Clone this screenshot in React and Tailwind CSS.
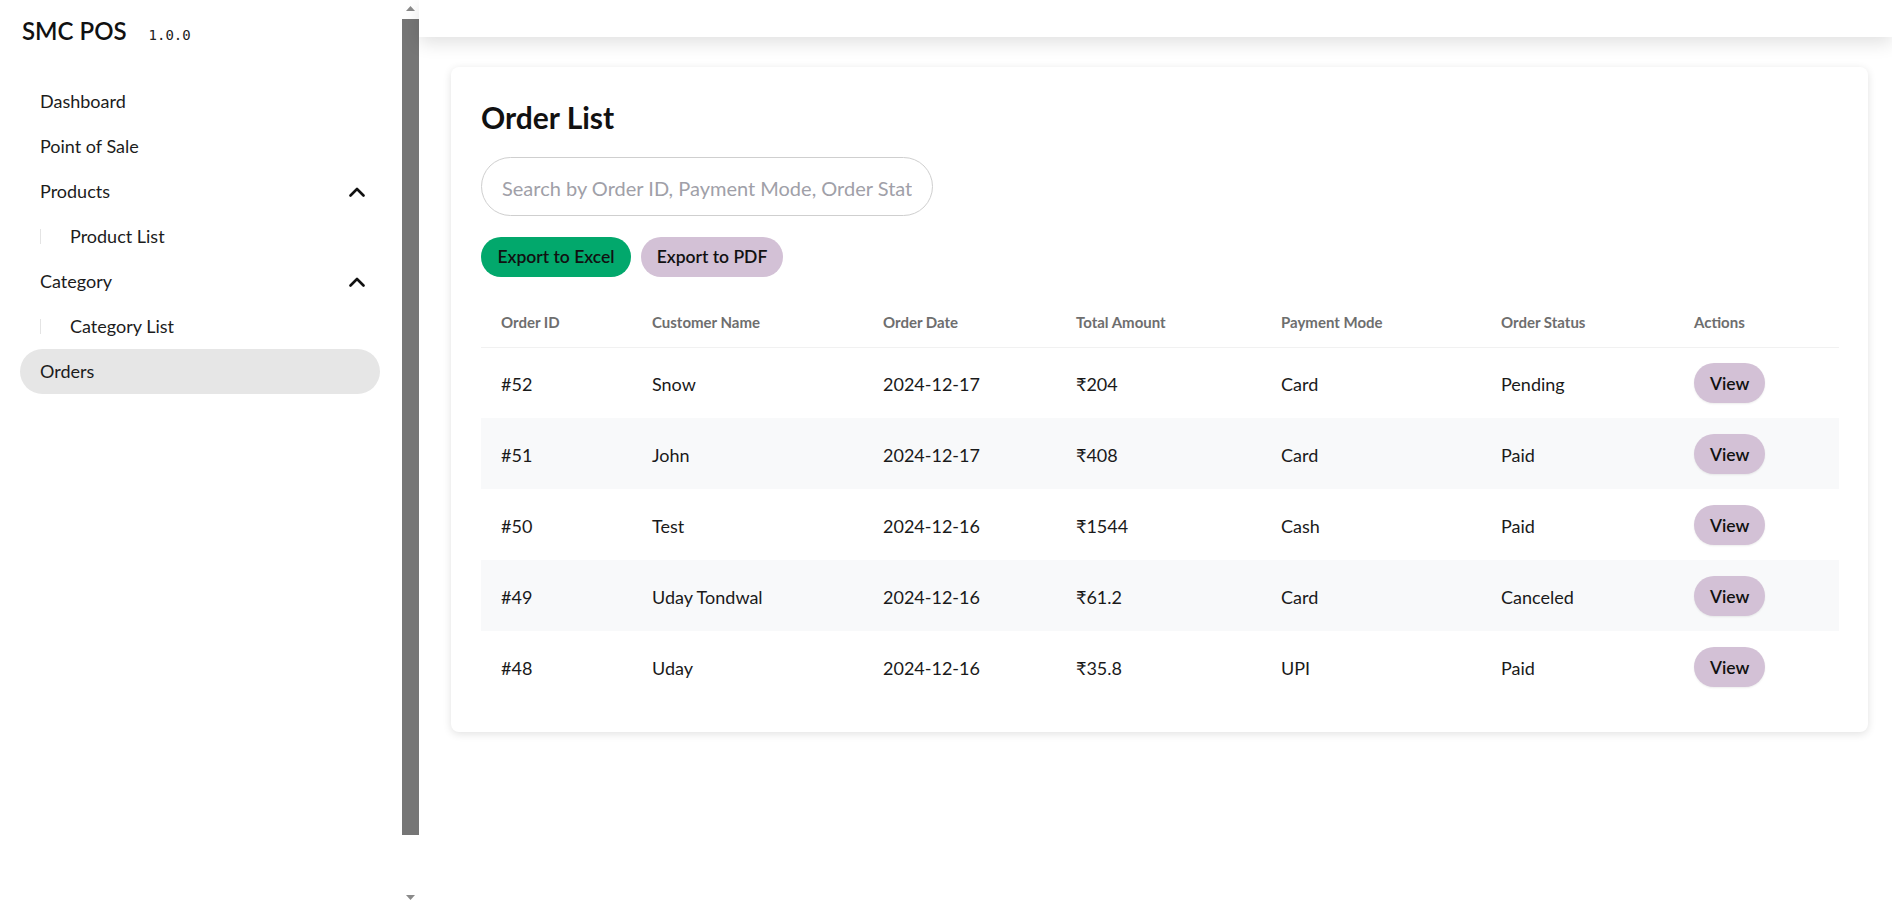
import React from 'react'

// Sidebar navigation entries
const navItems = [
  { label: 'Dashboard' },
  { label: 'Point of Sale' },
  { label: 'Products', open: true },
  { label: 'Product List', sub: true },
  { label: 'Category', open: true },
  { label: 'Category List', sub: true },
  { label: 'Orders', active: true },
]

const orders = [
  { id: '#52', name: 'Snow', date: '2024-12-17', total: '₹204', mode: 'Card', status: 'Pending' },
  { id: '#51', name: 'John', date: '2024-12-17', total: '₹408', mode: 'Card', status: 'Paid' },
  { id: '#50', name: 'Test', date: '2024-12-16', total: '₹1544', mode: 'Cash', status: 'Paid' },
  { id: '#49', name: 'Uday Tondwal', date: '2024-12-16', total: '₹61.2', mode: 'Card', status: 'Canceled' },
  { id: '#48', name: 'Uday', date: '2024-12-16', total: '₹35.8', mode: 'UPI', status: 'Paid' },
]

const columns = [
  { label: 'Order ID', width: 'w-[151px]' },
  { label: 'Customer Name', width: 'w-[231px]' },
  { label: 'Order Date', width: 'w-[193px]' },
  { label: 'Total Amount', width: 'w-[205px]' },
  { label: 'Payment Mode', width: 'w-[220px]' },
  { label: 'Order Status', width: 'w-[193px]' },
  { label: 'Actions', width: 'w-[165px]' },
]

function ChevronUp() {
  return (
    <svg width="16" height="10" viewBox="0 0 16 10" fill="none">
      <polyline points="1.5,8.5 8,2 14.5,8.5" stroke="#111" strokeWidth="2.6" strokeLinecap="round" strokeLinejoin="round" />
    </svg>
  )
}

function Scrollbar() {
  return (
    <div className="flex w-[17px] shrink-0 flex-col items-center bg-white">
      <svg className="mt-[6px]" width="9" height="5" viewBox="0 0 9 5">
        <polygon points="0,5 4.5,0 9,5" fill="#8a8a8a" />
      </svg>
      <div className="mt-[8px] h-[816px] w-[17px] bg-[#767676]" />
      <div className="flex-1" />
      <svg className="mb-[1px]" width="9" height="5" viewBox="0 0 9 5">
        <polygon points="0,0 9,0 4.5,5" fill="#8a8a8a" />
      </svg>
    </div>
  )
}

function Sidebar() {
  return (
    <aside className="flex h-full w-[419px] shrink-0">
      <div className="flex-1 pl-5 pr-[22px]">
        {/* Brand */}
        <div className="h-[79px] pt-[16px] pl-[2px]">
          <div className="flex items-baseline gap-[22px]">
            <span className="text-[24px] leading-[30px] font-semibold text-[#111]">SMC POS</span>
            <span className="font-['DejaVu_Sans_Mono',monospace] text-[14px] text-[#222]">1.0.0</span>
          </div>
        </div>

        {/* Nav */}
        <nav className="flex flex-col">
          {navItems.map((item) => (
            <div
              key={item.label}
              className={`flex h-[45px] items-center justify-between rounded-full pl-5 pr-[15px] text-[18px] text-[#1c1c1c] ${item.active ? 'bg-[#e6e6e6]' : ''}`}
            >
              {item.sub ? (
                <div className="flex items-center">
                  <span className="h-[15px] w-px bg-[#e4e4e4]" />
                  <span className="ml-[29px]">{item.label}</span>
                </div>
              ) : (
                <span>{item.label}</span>
              )}
              {item.open && <ChevronUp />}
            </div>
          ))}
        </nav>
      </div>
      <Scrollbar />
    </aside>
  )
}

function OrderTable() {
  return (
    <table className="w-full table-fixed border-collapse text-left">
      <thead>
        <tr className="border-b border-[#f1f1f1]">
          {columns.map((c) => (
            <th key={c.label} className={`${c.width} h-[50px] px-5 pt-[1px] text-[15px] font-bold text-[#6e6e6e]`}>
              {c.label}
            </th>
          ))}
        </tr>
      </thead>
      <tbody>
        {orders.map((o, i) => (
          <tr key={o.id} className={`h-[71px] text-[18px] text-[#1a1a1a] ${i % 2 === 1 ? 'bg-[#f8f9fa]' : 'bg-white'}`}>
            <td className="px-5 pt-[4px]">{o.id}</td>
            <td className="px-5 pt-[4px]">{o.name}</td>
            <td className="px-5 pt-[4px]">{o.date}</td>
            <td className="px-5 pt-[4px]">{o.total}</td>
            <td className="px-5 pt-[4px]">{o.mode}</td>
            <td className="px-5 pt-[4px]">{o.status}</td>
            <td className="px-5">
              <button className="h-[40px] rounded-full bg-[#d3c1d6] px-4 pt-[3px] text-[17.5px] font-semibold text-[#111] shadow-[0_1px_2px_rgba(0,0,0,0.08)]">
                View
              </button>
            </td>
          </tr>
        ))}
      </tbody>
    </table>
  )
}

export default function App() {
  return (
    <div className="flex h-[901px] w-full overflow-hidden bg-white font-['Lato','Noto_Sans',sans-serif]">
      <Sidebar />

      <main className="flex min-w-0 flex-1 flex-col">
        {/* Top bar */}
        <header className="h-[37px] shrink-0 bg-white shadow-[0_6px_18px_rgba(0,0,0,0.12)]" />

        <div className="pt-[30px] pl-[32px] pr-[24px]">
          <div className="rounded-lg bg-white px-[30px] pt-[32px] pb-[30px] shadow-[0_2px_8px_rgba(0,0,0,0.12)]">
            <h1 className="text-[30px] leading-[36px] font-bold text-[#111]">Order List</h1>

            <input
              type="text"
              placeholder="Search by Order ID, Payment Mode, Order Status"
              className="mt-[22px] block h-[59px] w-[452px] rounded-full border border-[#cfcfcf] px-[20px] pt-[3px] text-[20px] placeholder:text-[#a0a0a8] focus:outline-none"
            />

            <div className="mt-[21px] flex gap-[10px]">
              <button className="h-[40px] w-[150px] rounded-full bg-[#02a86c] pt-[1px] text-[17.5px] font-semibold text-[#111]">
                Export to Excel
              </button>
              <button className="h-[40px] w-[142px] rounded-full bg-[#d3c1d6] pt-[1px] text-[17.5px] font-semibold text-[#111]">
                Export to PDF
              </button>
            </div>

            <div className="mt-[20px]">
              <OrderTable />
            </div>
          </div>
        </div>
      </main>
    </div>
  )
}
